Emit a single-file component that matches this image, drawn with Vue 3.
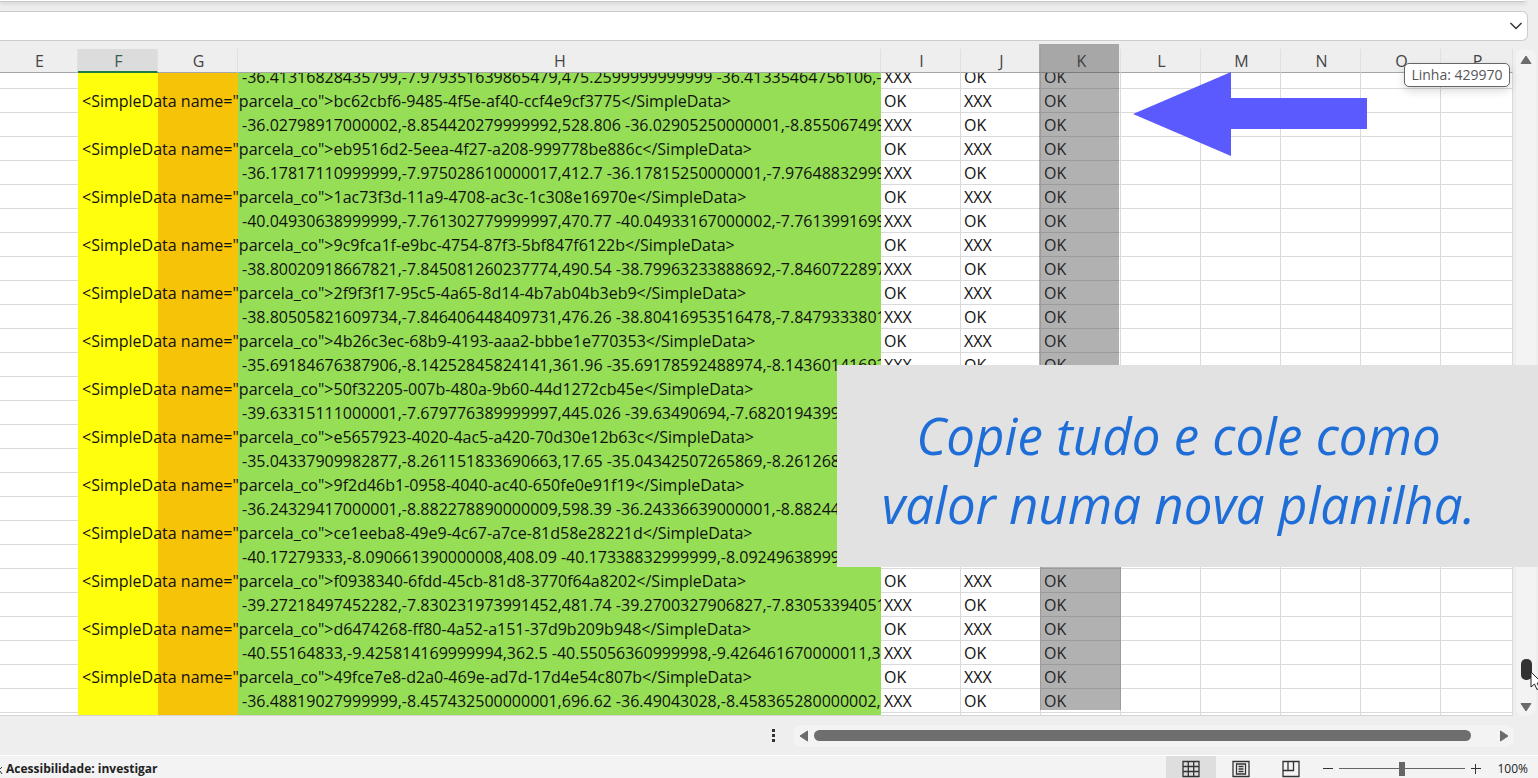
<template>
  <main class="workbook">
    <div class="ribbon-edge"></div>

    <!-- Formula bar -->
    <div class="formula-bar">
      <input class="formula-bar__input" type="text" aria-label="Barra de fórmulas" />
      <button class="formula-bar__toggle" type="button" aria-label="Expandir barra de fórmulas">
        <svg width="14" height="8" viewBox="0 0 14 8">
          <path d="M1.5 1 L7 6.5 L12.5 1" fill="none" stroke="#333" stroke-width="1.5" />
        </svg>
      </button>
    </div>

    <!-- Sheet -->
    <div class="sheet-area">
      <div class="sheet">
        <table class="grid">
          <colgroup>
            <col v-for="col in columns" :key="col" :class="'col-' + col.toLowerCase()" />
          </colgroup>
          <thead>
            <tr>
              <th
                v-for="col in columns"
                :key="col"
                scope="col"
                :class="{ active: col === 'F' }"
              >{{ col }}</th>
            </tr>
          </thead>
          <tbody>
            <tr v-for="(row, index) in rows" :key="index">
              <td></td>
              <td class="yellow"><div v-if="row.id" class="cell">{{ tag(row.id) }}</div></td>
              <td class="orange"></td>
              <td class="green"><div v-if="row.coords" class="cell cell--clip">{{ row.coords }}</div></td>
              <td v-for="(status, n) in statuses(row, index)" :key="n">
                <div v-if="status" class="cell cell--status">{{ status }}</div>
              </td>
              <td v-for="n in 5" :key="n"></td>
            </tr>
            <tr class="partial">
              <td></td>
              <td class="yellow"></td>
              <td class="orange"></td>
              <td class="green"></td>
              <td v-for="n in 8" :key="n"></td>
            </tr>
          </tbody>
        </table>
      </div>

      <div class="vscroll">
        <button type="button" aria-label="Rolar para cima">
          <svg width="12" height="10" viewBox="0 0 12 10">
            <path d="M6 1 L11 8.5 H1 Z" fill="#6b6b6b" stroke="#6b6b6b" stroke-linejoin="round" />
          </svg>
        </button>
        <div class="vscroll__thumb"></div>
        <button type="button" aria-label="Rolar para baixo">
          <svg width="12" height="10" viewBox="0 0 12 10">
            <path d="M1 1.5 H11 L6 9 Z" fill="#6b6b6b" stroke="#6b6b6b" stroke-linejoin="round" />
          </svg>
        </button>
      </div>
    </div>

    <!-- Horizontal scroll -->
    <div class="hscroll-row">
      <svg class="dots" width="4" height="14" viewBox="0 0 4 14">
        <path d="M0 0h3v3H0z M0 5h3v3H0z M0 10h3v3H0z" fill="#333" />
      </svg>
      <div class="hscroll">
        <button type="button" aria-label="Rolar para a esquerda">
          <svg width="10" height="12" viewBox="0 0 10 12">
            <path d="M8.5 1 V11 L1 6 Z" fill="#6b6b6b" stroke="#6b6b6b" stroke-linejoin="round" />
          </svg>
        </button>
        <div class="hscroll__thumb"></div>
        <button type="button" aria-label="Rolar para a direita">
          <svg width="10" height="12" viewBox="0 0 10 12">
            <path d="M1.5 1 V11 L9 6 Z" fill="#6b6b6b" stroke="#6b6b6b" stroke-linejoin="round" />
          </svg>
        </button>
      </div>
    </div>

    <!-- Status bar -->
    <footer class="status-bar">
      <svg width="3" height="12" viewBox="0 0 3 12">
        <path d="M0 6 L2 4 M0 8 L2 11" stroke="#333" fill="none" />
      </svg>
      <span class="status-bar__access">Acessibilidade: investigar</span>
      <div class="views">
        <button class="selected" type="button" aria-label="Normal">
          <svg width="18" height="18" viewBox="0 0 18 18" fill="none" stroke="#333" stroke-width="1.3">
            <path d="M1 1.5 H17 V16.5 H1 Z M1 6.5 H17 M1 11.5 H17 M6.3 1.5 V16.5 M11.7 1.5 V16.5" />
          </svg>
        </button>
        <button type="button" aria-label="Layout da página">
          <svg width="18" height="18" viewBox="0 0 18 18" fill="none" stroke="#333" stroke-width="1.3">
            <path d="M1 1.5 H17 V16.5 H1 Z M4.5 4 H13.5 V14 H4.5 Z M6.5 6.5 H11.5 M6.5 9 H11.5 M6.5 11.5 H11.5" />
          </svg>
        </button>
        <button type="button" aria-label="Quebra de página">
          <svg width="18" height="18" viewBox="0 0 18 18" fill="none" stroke="#333" stroke-width="1.3">
            <path d="M1 1.5 H17 V16.5 H1 Z M1 10.5 H11.5 V1.5 M6 1.5 V10.5" />
          </svg>
        </button>
      </div>
      <div class="zoom">
        <button type="button" aria-label="Reduzir">
          <svg width="10" height="10" viewBox="0 0 10 10"><path d="M0 4.5 H10" stroke="#333" /></svg>
        </button>
        <input v-model="zoom" type="range" min="0" max="200" aria-label="Zoom" />
        <button type="button" aria-label="Ampliar">
          <svg width="10" height="10" viewBox="0 0 10 10"><path d="M0 4.5 H10 M4.5 0 V10" stroke="#333" /></svg>
        </button>
        <span class="zoom__value">{{ zoom }}%</span>
      </div>
    </footer>

    <!-- Annotations over the sheet -->
    <div class="shade shade--top"></div>
    <div class="shade shade--bottom"></div>
    <svg class="arrow" width="234" height="84" viewBox="0 0 234 84">
      <path d="M0 42 L98 0 V26 H234 V57 H98 V84 Z" fill="#5a5aff" />
    </svg>
    <div class="row-tip">Linha: 429970</div>
    <p class="caption">Copie tudo e cole como<br />valor numa nova planilha.</p>
    <svg class="cursor" width="14" height="20" viewBox="0 0 14 20">
      <path d="M1 1 V16 L4.5 13 L7 18.5 L9.5 17.4 L7.2 12 H12 Z" fill="#fff" stroke="#222" />
    </svg>
  </main>
</template>

<script setup>
import { ref } from 'vue'

const zoom = ref(100)

const columns = ['E', 'F', 'G', 'H', 'I', 'J', 'K', 'L', 'M', 'N', 'O', 'P']

const rows = [
  { coords: '-36.41316828435799,-7.979351639865479,475.2599999999999 -36.41335464756106,-' },
  { id: 'bc62cbf6-9485-4f5e-af40-ccf4e9cf3775' },
  { coords: '-36.02798917000002,-8.854420279999992,528.806 -36.02905250000001,-8.855067499' },
  { id: 'eb9516d2-5eea-4f27-a208-999778be886c' },
  { coords: '-36.17817110999999,-7.975028610000017,412.7 -36.17815250000001,-7.97648832999' },
  { id: '1ac73f3d-11a9-4708-ac3c-1c308e16970e' },
  { coords: '-40.04930638999999,-7.761302779999997,470.77 -40.04933167000002,-7.7613991699' },
  { id: '9c9fca1f-e9bc-4754-87f3-5bf847f6122b' },
  { coords: '-38.80020918667821,-7.845081260237774,490.54 -38.79963233888692,-7.8460722897' },
  { id: '2f9f3f17-95c5-4a65-8d14-4b7ab04b3eb9' },
  { coords: '-38.80505821609734,-7.846406448409731,476.26 -38.80416953516478,-7.8479333801' },
  { id: '4b26c3ec-68b9-4193-aaa2-bbbe1e770353' },
  { coords: '-35.69184676387906,-8.14252845824141,361.96 -35.69178592488974,-8.14360141692' },
  { id: '50f32205-007b-480a-9b60-44d1272cb45e' },
  { coords: '-39.63315111000001,-7.679776389999997,445.026 -39.63490694,-7.6820194399' },
  { id: 'e5657923-4020-4ac5-a420-70d30e12b63c' },
  { coords: '-35.04337909982877,-8.261151833690663,17.65 -35.04342507265869,-8.261268' },
  { id: '9f2d46b1-0958-4040-ac40-650fe0e91f19' },
  { coords: '-36.24329417000001,-8.882278890000009,598.39 -36.24336639000001,-8.88244' },
  { id: 'ce1eeba8-49e9-4c67-a7ce-81d58e28221d' },
  { coords: '-40.17279333,-8.090661390000008,408.09 -40.17338832999999,-8.09249638999' },
  { id: 'f0938340-6fdd-45cb-81d8-3770f64a8202' },
  { coords: '-39.27218497452282,-7.830231973991452,481.74 -39.2700327906827,-7.83053394051' },
  { id: 'd6474268-ff80-4a52-a151-37d9b209b948' },
  { coords: '-40.55164833,-9.425814169999994,362.5 -40.55056360999998,-9.426461670000011,3' },
  { id: '49fce7e8-d2a0-469e-ad7d-17d4e54c807b' },
  { coords: '-36.48819027999999,-8.457432500000001,696.62 -36.49043028,-8.458365280000002,' },
]

function tag(id) {
  return `<SimpleData name="parcela_co">${id}</SimpleData>`
}

// Columns I, J and K; the rows behind the caption stay empty
function statuses(row, index) {
  if (index > 12 && index < 21) {
    return ['', '', '']
  }
  return row.id ? ['OK', 'XXX', 'OK'] : ['XXX', 'OK', 'OK']
}
</script>

<style>
body {
  margin: 0;
  background: #eee;
}
</style>

<style scoped>
.workbook {
  position: relative;
  display: flex;
  flex-direction: column;
  min-height: 100vh;
  overflow: hidden;
  background: #eee;
  font-family: 'Open Sans', 'Noto Sans', sans-serif;
  color: #222;
}

button {
  display: flex;
  align-items: center;
  justify-content: center;
  padding: 0;
  border: 0;
  background: none;
}

.ribbon-edge {
  height: 1px;
  margin-right: 12px;
  background: #fff;
  border-bottom: 1px solid #c8caca;
  border-bottom-right-radius: 4px;
  box-shadow: 0 1px 4px #bbb;
}

.formula-bar {
  display: flex;
  box-sizing: border-box;
  height: 30px;
  margin: 9px 10px 8px 0;
  background: #fff;
  border: 1px solid #ccc;
  border-left: 0;
  border-radius: 0 6px 6px 0;
}

.formula-bar__input {
  flex: 1;
  border: 0;
  background: none;
}

.formula-bar__toggle {
  width: 22px;
}

.sheet-area {
  display: flex;
  flex: 1;
}

.sheet {
  flex: 1;
  min-width: 0;
}

.grid {
  width: 100%;
  table-layout: fixed;
  border-collapse: separate;
  border-spacing: 0;
  border-bottom: 1px solid #d4d4d4;
}

col {
  width: 80px;
}

.col-e {
  width: 78px;
}

.col-h {
  width: 643px;
}

.col-p {
  width: auto;
}

th {
  box-sizing: border-box;
  height: 24px;
  padding: 1px 0 0 2px;
  border-right: 1px solid #e0e0e0;
  border-bottom: 1px solid #a6a6a6;
  font-size: 16px;
  line-height: 22px;
  font-weight: 400;
  color: #444;
}

th.active {
  padding-top: 2px;
  background: #dcdcdc;
  border-bottom: 2px solid #1e7b45;
  line-height: 20px;
  color: #3c5a48;
}

td {
  box-sizing: border-box;
  height: 24px;
  padding: 0;
  background: #fff;
  border-right: 1px solid #dadada;
  border-bottom: 1px solid #dadada;
}

td:first-child {
  border-right: 0;
}

tbody tr:first-child td {
  height: 16px;
}

.partial td {
  height: 2px;
  border-bottom: 0;
}

td.yellow {
  background: #ffff0b;
  border-color: #ffff0b;
}

td.orange {
  background: #f6c309;
  border-color: #f6c309;
}

td.green {
  background: #96de55;
  border-color: #96de55;
  border-right: 0;
}

.cell {
  height: 23px;
  padding-left: 4px;
  font-size: 16px;
  line-height: 24px;
  white-space: nowrap;
  color: #111;
}

.cell--clip {
  overflow: hidden;
}

.cell--status {
  padding-left: 3px;
}

tbody tr:first-child .cell {
  display: flex;
  align-items: flex-end;
  height: 15px;
  line-height: 22px;
  overflow: hidden;
}

.vscroll {
  display: flex;
  flex-direction: column;
  align-items: center;
  width: 20px;
  margin: 0 2px 0 3px;
  background: #f3f3f3;
  border-radius: 8px;
}

.vscroll button {
  width: 20px;
  height: 18px;
}

.vscroll button:first-child {
  height: 22px;
}

.vscroll__thumb {
  width: 11px;
  height: 21px;
  margin-top: auto;
  margin-bottom: 18px;
  background: #333;
  border-radius: 5px;
}

.hscroll-row {
  display: flex;
  align-items: center;
  justify-content: flex-end;
  gap: 18px;
  height: 39px;
  padding-right: 24px;
}

.hscroll {
  display: flex;
  align-items: center;
  width: 720px;
  height: 22px;
  background: #f3f3f3;
  border-radius: 8px;
}

.hscroll button {
  width: 20px;
  height: 22px;
}

.hscroll__thumb {
  flex: 1;
  height: 11px;
  margin-right: 23px;
  background: #6e6e6e;
  border-radius: 6px;
}

.status-bar {
  display: flex;
  align-items: center;
  box-sizing: border-box;
  height: 23px;
  border-top: 1px solid #fff;
  background: #f3f3f3;
  font-size: 12px;
}

.status-bar > * {
  padding-top: 3px;
}

.status-bar__access {
  padding-left: 3px;
  font-weight: 700;
}

.status-bar .views {
  display: flex;
  margin-left: auto;
  padding-top: 0;
}

.views button {
  width: 50px;
  height: 22px;
  padding-top: 3px;
}

.views button.selected {
  background: #dedede;
}

.zoom {
  display: flex;
  align-items: center;
  gap: 6px;
  padding-left: 7px;
  padding-right: 10px;
}

.zoom input {
  width: 126px;
  height: 16px;
  margin: 0;
  appearance: none;
  background: linear-gradient(#666, #666) center / 100% 1px no-repeat;
}

.zoom input::-webkit-slider-thumb {
  appearance: none;
  width: 6px;
  height: 14px;
  background: #666;
}

.zoom__value {
  padding-left: 10px;
}

.shade {
  position: absolute;
  left: 1039px;
  width: 80px;
  background: rgba(60, 60, 60, 0.4);
}

.shade--top {
  top: 44px;
  height: 321px;
}

.shade--bottom {
  top: 567px;
  left: 1040px;
  width: 81px;
  height: 143px;
}

.arrow {
  position: absolute;
  top: 72px;
  left: 1133px;
}

.row-tip {
  position: absolute;
  top: 63px;
  right: 28px;
  box-sizing: border-box;
  width: 106px;
  height: 24px;
  border: 1px solid #666;
  border-radius: 5px;
  background: #fff;
  box-shadow: 0 4px 10px rgba(0, 0, 0, 0.15);
  font-size: 14px;
  line-height: 22px;
  text-align: center;
  color: #555;
}

.caption {
  position: absolute;
  top: 365px;
  left: 837px;
  right: 0;
  box-sizing: border-box;
  height: 202px;
  margin: 0;
  padding: 36px 0;
  padding-right: 18px;
  background: #e2e2e2;
  font-size: 51px;
  line-height: 69px;
  font-style: italic;
  text-align: center;
  white-space: nowrap;
  color: #1f6dd6;
}

.cursor {
  position: absolute;
  top: 671px;
  left: 1530px;
}
</style>
